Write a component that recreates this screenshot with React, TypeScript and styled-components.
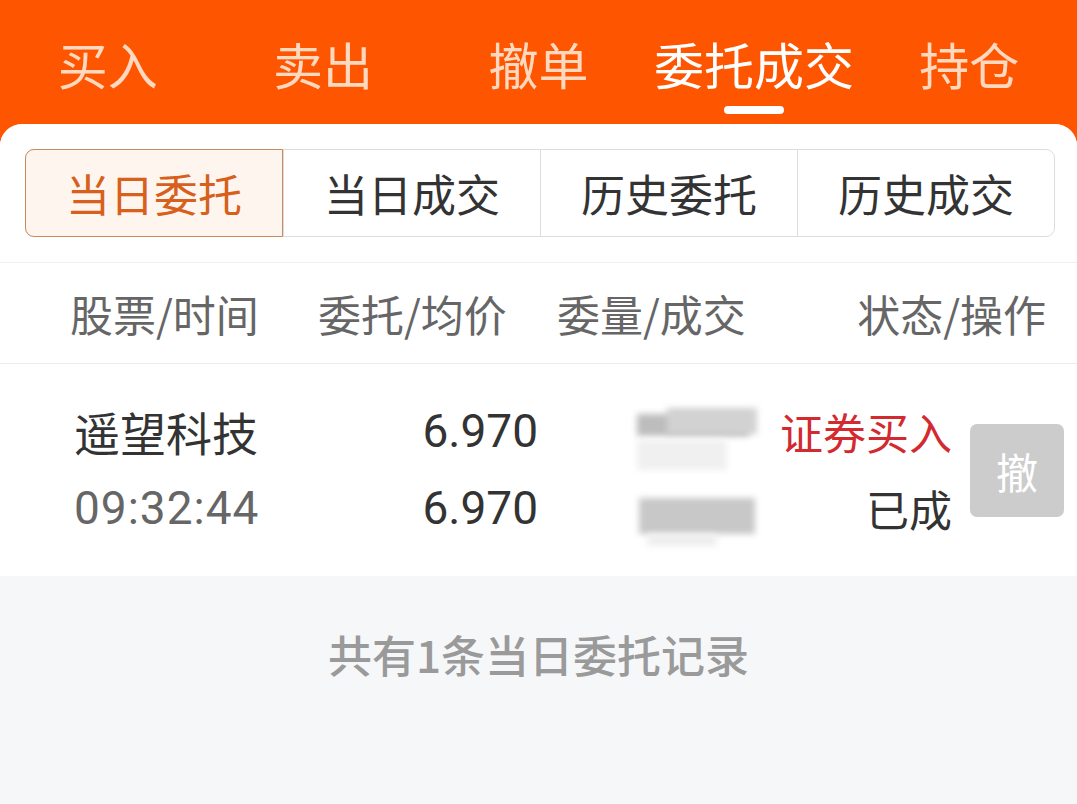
import React from "react";
import styled, { createGlobalStyle } from "styled-components";

const Global = createGlobalStyle`
  html, body { margin: 0; padding: 0; background: #fe5600; }
  body { font-family: "Noto Sans CJK SC", "Noto Sans", sans-serif; }
  #root { min-height: 804px; }
`;

const Page = styled.div`
  width: 1077px;
  height: 804px;
  display: flex;
  flex-direction: column;
  background: #fe5600;
  overflow: hidden;
`;

const TopTabs = styled.div`
  display: flex;
  height: 124px;
`;

const TopTab = styled.div<{ $active?: boolean }>`
  flex: 1;
  display: flex;
  flex-direction: column;
  align-items: center;
  padding-top: 30px;
  font-size: 50px;
  line-height: 66px;
  color: ${(p) => (p.$active ? "#ffffff" : "#ffd8c0")};
  position: relative;
`;

const Indicator = styled.div`
  position: absolute;
  top: 106px;
  width: 60px;
  height: 8px;
  border-radius: 4px;
  background: #ffffff;
`;

const Card = styled.div`
  flex: 1;
  background: #f6f7f9;
  border-radius: 22px 22px 0 0;
  overflow: hidden;
  display: flex;
  flex-direction: column;
`;

const WhiteArea = styled.div`
  background: #ffffff;
`;

const SegWrap = styled.div`
  padding: 25px 22px 25px 25px;
`;

const Segments = styled.div`
  display: flex;
  height: 88px;
  border: 1px solid #dddddd;
  border-radius: 9px;
  box-sizing: border-box;
`;

const Segment = styled.div<{ $active?: boolean }>`
  flex: 1;
  display: flex;
  align-items: center;
  justify-content: center;
  font-size: 44px;
  color: ${(p) => (p.$active ? "#d6601c" : "#333333")};
  background: ${(p) => (p.$active ? "#fff5ef" : "transparent")};
  margin: ${(p) => (p.$active ? "-1px 0 -1px -1px" : "0")};
  border: ${(p) => (p.$active ? "1px solid #c98a5c" : "none")};
  border-radius: ${(p) => (p.$active ? "9px 0 0 9px" : "0")};
  & + & {
    border-left: 1px solid #dddddd;
  }
`;

const HeaderRow = styled.div`
  display: grid;
  grid-template-columns: 248px 239px 1fr auto;
  align-items: center;
  height: 100px;
  padding: 0 31px 0 70px;
  border-top: 1px solid #f0f0f0;
  border-bottom: 1px solid #ececec;
  font-size: 43px;
  color: #666666;
`;

const DataRow = styled.div`
  display: grid;
  grid-template-columns: 290px 174px 242px 172px 112px;
  align-items: center;
  height: 212px;
  padding: 0 13px 0 74px;
`;

const Stack = styled.div<{ $align?: "left" | "right" }>`
  display: flex;
  flex-direction: column;
  gap: 14px;
  align-items: ${(p) => (p.$align === "right" ? "flex-end" : "flex-start")};
`;

const Line = styled.div<{ $color?: string; $num?: boolean; $size?: number; $spacing?: number }>`
  font-size: ${(p) => p.$size ?? 46}px;
  line-height: 63px;
  letter-spacing: ${(p) => p.$spacing ?? 0}px;
  color: ${(p) => p.$color ?? "#333333"};
  font-family: ${(p) =>
    p.$num ? '"Roboto", "Noto Sans", sans-serif' : '"Noto Sans CJK SC", sans-serif'};
  white-space: nowrap;
`;

const Blur = styled.div`
  position: relative;
  height: 160px;
  margin-left: 99px;
  width: 130px;
`;

const Pixel = styled.div`
  position: absolute;
  filter: blur(3px);
`;

const ActionCell = styled.div`
  display: flex;
  justify-content: flex-end;
`;

const CancelBtn = styled.div`
  width: 94px;
  height: 93px;
  border-radius: 7px;
  background: #cccccc;
  color: #ffffff;
  font-size: 42px;
  display: flex;
  align-items: center;
  justify-content: center;
`;

const Footer = styled.div`
  display: flex;
  justify-content: center;
  padding-top: 46px;
  font-size: 44px;
  font-weight: 500;
  color: #9a9a9a;
`;

const tabs = ["买入", "卖出", "撤单", "委托成交", "持仓"];
const segs = ["当日委托", "当日成交", "历史委托", "历史成交"];

export default function App() {
  return (
    <Page>
      <Global />
      <TopTabs>
        {tabs.map((t, i) => (
          <TopTab key={t} $active={i === 3}>
            {t}
            {i === 3 && <Indicator />}
          </TopTab>
        ))}
      </TopTabs>
      <Card>
        <WhiteArea>
          <SegWrap>
            <Segments>
              {segs.map((s, i) => (
                <Segment key={s} $active={i === 0}>
                  {s}
                </Segment>
              ))}
            </Segments>
          </SegWrap>
          <HeaderRow>
            <span>股票/时间</span>
            <span>委托/均价</span>
            <span>委量/成交</span>
            <span>状态/操作</span>
          </HeaderRow>
          <DataRow>
            <Stack>
              <Line>遥望科技</Line>
              <Line $color="#666666" $num $spacing={1}>09:32:44</Line>
            </Stack>
            <Stack $align="right">
              <Line $num>6.970</Line>
              <Line $num>6.970</Line>
            </Stack>
            <Blur>
              <Pixel style={{ left: 0, top: 24, width: 112, height: 22, background: "#bdbdbd" }} />
              <Pixel style={{ left: 30, top: 18, width: 90, height: 26, background: "#d2d2d2" }} />
              <Pixel style={{ left: 0, top: 50, width: 90, height: 30, background: "#f0f0f0" }} />
              <Pixel style={{ left: 2, top: 108, width: 116, height: 36, background: "#c8c8c8" }} />
              <Pixel style={{ left: 10, top: 144, width: 70, height: 12, background: "#eeeeee" }} />
            </Blur>
            <Stack $align="right">
              <Line $color="#d22a2f" $size={43}>证券买入</Line>
              <Line $size={43}>已成</Line>
            </Stack>
            <ActionCell>
              <CancelBtn>撤</CancelBtn>
            </ActionCell>
          </DataRow>
        </WhiteArea>
        <Footer>共有1条当日委托记录</Footer>
      </Card>
    </Page>
  );
}
